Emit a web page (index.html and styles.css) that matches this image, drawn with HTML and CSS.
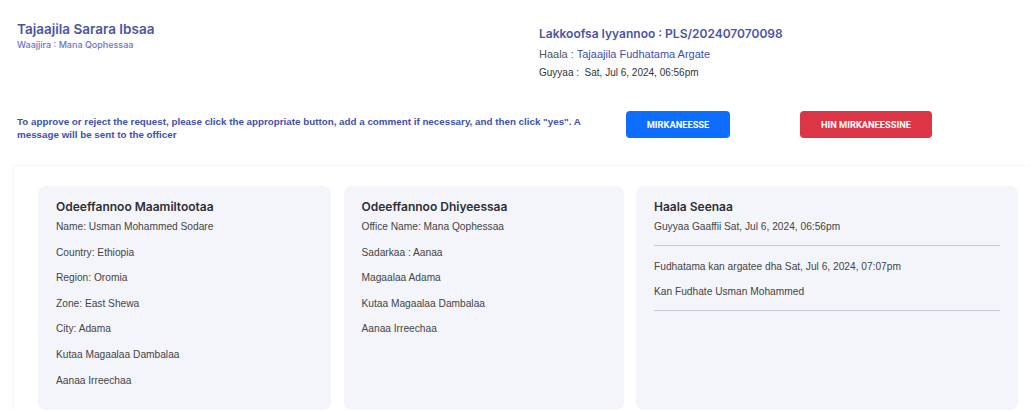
FILE: index.html
```html
<!DOCTYPE html>
<html>
<head>
<meta charset="utf-8">
<link rel="stylesheet" href="styles.css">
</head>
<body>
<div class="page">
  <header class="top">
    <div class="who">
      <h1 class="title">Tajaajila Sarara Ibsaa</h1>
      <div class="office">Waajjira : Mana Qophessaa</div>
    </div>
    <div class="meta">
      <div class="ref">Lakkoofsa Iyyannoo : PLS/202407070098</div>
      <div class="status">Haala : <span class="status-val">Tajaajila Fudhatama Argate</span></div>
      <div class="date">Guyyaa : &nbsp;Sat, Jul 6, 2024, 06:56pm</div>
    </div>
  </header>

  <section class="actions">
    <p class="hint">To approve or reject the request, please click the appropriate button, add a comment if necessary, and then click "yes". A message will be sent to the officer</p>
    <button class="btn btn-approve">MIRKANEESSE</button>
    <button class="btn btn-reject">HIN MIRKANEESSINE</button>
  </section>

  <section class="panel">
    <div class="card">
      <h2 class="card-title">Odeeffannoo Maamiltootaa</h2>
      <p class="item">Name: Usman Mohammed Sodare</p>
      <p class="item">Country: Ethiopia</p>
      <p class="item">Region: Oromia</p>
      <p class="item">Zone: East Shewa</p>
      <p class="item">City: Adama</p>
      <p class="item">Kutaa Magaalaa Dambalaa</p>
      <p class="item">Aanaa Irreechaa</p>
    </div>
    <div class="card">
      <h2 class="card-title">Odeeffannoo Dhiyeessaa</h2>
      <p class="item">Office Name: Mana Qophessaa</p>
      <p class="item">Sadarkaa : Aanaa</p>
      <p class="item">Magaalaa Adama</p>
      <p class="item">Kutaa Magaalaa Dambalaa</p>
      <p class="item">Aanaa Irreechaa</p>
    </div>
    <div class="card">
      <h2 class="card-title">Haala Seenaa</h2>
      <p class="item">Guyyaa Gaaffii Sat, Jul 6, 2024, 06:56pm</p>
      <hr class="rule">
      <p class="item">Fudhatama kan argatee dha Sat, Jul 6, 2024, 07:07pm</p>
      <p class="item">Kan Fudhate Usman Mohammed</p>
      <hr class="rule">
    </div>
  </section>
</div>
</body>
</html>
```

FILE: styles.css
```css
* { box-sizing: border-box; }
html, body { margin: 0; background: #fff; }
body { font-family: "Liberation Sans", Arial, sans-serif; }

.page { padding-top: 20px; }

.top { display: flex; padding-left: 17px; }
.who { width: 522px; }
.title {
  margin: 0;
  font-family: Inter, "Noto Sans", sans-serif;
  font-weight: 600;
  font-size: 13.5px;
  line-height: 18px;
  color: #4b54a3;
}
.office {
  font-family: Inter, "Noto Sans", sans-serif;
  font-size: 9px;
  font-weight: 500;
  color: #6c74c4;
  margin-top: 1px;
}
.meta { padding-top: 6px; }
.ref {
  font-family: Inter, "Noto Sans", sans-serif;
  font-weight: 600;
  font-size: 12px;
  line-height: 16px;
  color: #4b54a3;
}
.status { font-size: 11px; color: #555; margin-top: 5px; line-height: 14px; }
.status-val { color: #3d4fb0; }
.date { font-size: 10px; color: #333; margin-top: 5px; line-height: 14px; }

.actions {
  display: flex;
  align-items: flex-start;
  padding-left: 17px;
  margin-top: 31px;
}
.hint {
  margin: 4px 0 0;
  width: 578px;
  font-size: 9.8px;
  line-height: 13px;
  font-weight: 600;
  color: #4150ae;
}
.btn {
  border: 0;
  border-radius: 4px;
  height: 27px;
  color: #fff;
  font-family: Roboto, "Liberation Sans", sans-serif;
  font-weight: 700;
  font-size: 9.3px;
  padding: 0;
}
.btn-approve { background: #0d6efd; width: 104px; margin-left: 31px; }
.btn-reject { background: #dc3545; width: 132px; margin-left: 70px; }

.panel {
  margin: 26px 0 0 14px;
  padding: 19px 13px 0 24px;
  box-shadow: 0 0 6px rgba(0,0,0,0.06);
  display: grid;
  grid-template-columns: 293px 280px 382px;
  column-gap: 12.5px;
}
.card {
  background: #f4f5fb;
  border-radius: 8px;
  padding: 13px 18px 0;
  height: 224px;
}
.card-title {
  margin: 0 0 7px;
  font-family: Inter, "Noto Sans", sans-serif;
  font-weight: 600;
  font-size: 12px;
  line-height: 15px;
  color: #2d2f36;
}
.item {
  margin: 0 0 13.6px;
  font-size: 10.2px;
  line-height: 12px;
  color: #444;
}
.card .item:last-child { margin-bottom: 0; }
.rule {
  border: 0;
  border-top: 1px solid #c9cad3;
  margin: -2px 0 15px;
}
.card .rule:last-child { margin-bottom: 0; }
```
